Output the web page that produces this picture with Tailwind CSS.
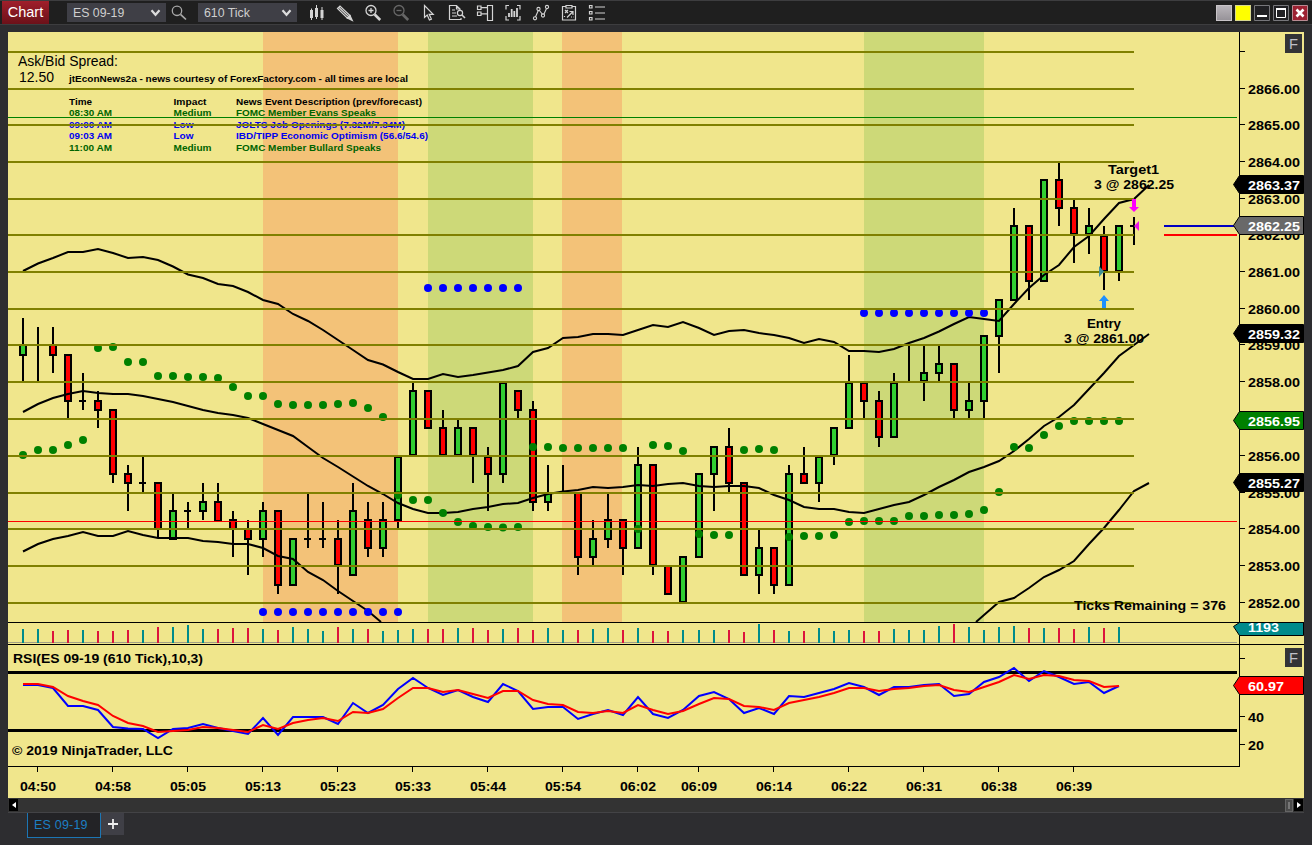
<!DOCTYPE html>
<html lang="en">
<head>
  <meta charset="UTF-8">
  <meta name="viewport" content="width=device-width,initial-scale=1">
  <title>Chart - ES 09-19</title>
  <script src="https://cdn.jsdelivr.net/npm/@tailwindcss/browser@4"></script>
</head>
<body class="w-[1312px] h-[845px] overflow-hidden bg-[#2d2d30] font-['Liberation_Sans',sans-serif] flex flex-col">

  <!-- Toolbar -->
  <header class="h-[25px] shrink-0 flex items-center bg-[#1f1f1f] border-t border-b border-[#3d3d3f] pl-0.5 pr-1">
    <div class="w-[47px] h-[23px] flex items-center justify-center bg-linear-to-b from-[#a01f2b] to-[#6c1119] text-white text-[14.5px]">Chart</div>
    <div class="ml-[18px] w-[99px] h-[19px] flex items-center justify-between bg-[#3f3f46] pl-1.5 pr-[5px] pt-px text-[12.3px] text-[#cfcfcf]">
      ES 09-19
      <svg width="11" height="8" viewBox="0 0 11 8" fill="none" stroke="#dcdcdc" stroke-width="2.2"><path d="M1.5 1.2 5.5 5.8 9.5 1.2"/></svg>
    </div>
    <svg class="ml-[5px]" width="17" height="18" viewBox="0 0 17 18" fill="none" stroke="#a8a8a8" stroke-width="1.3"><circle cx="6" cy="6.8" r="4.7"/><path d="M9.5 10.3 15 15.5" stroke-width="1.7"/></svg>
    <div class="ml-[10px] w-[99px] h-[19px] flex items-center justify-between bg-[#3f3f46] pl-1.5 pr-[5px] pt-px text-[12.3px] text-[#cfcfcf]">
      610 Tick
      <svg width="11" height="8" viewBox="0 0 11 8" fill="none" stroke="#dcdcdc" stroke-width="2.2"><path d="M1.5 1.2 5.5 5.8 9.5 1.2"/></svg>
    </div>

    <nav class="ml-[6px] flex text-[#d4d4d4]">
      <div class="w-7 flex justify-center"><svg width="18" height="18" viewBox="0 0 18 18" fill="currentColor"><path d="M2 6h3v8H2zM3 4.500h1V16H3zM7 4h3v9H7zM8 1h1v14H8zM12.500 6h3v8h-3zM13.500 3h1v13h-1z"/></svg></div>
      <div class="w-7 flex justify-center"><svg width="18" height="18" viewBox="0 0 18 18" fill="none" stroke="currentColor" stroke-width="1.2"><path d="M1.500 4.500 4 2l10 9.500-2.600 2.600zM3 3.500l10 9.500"/><path d="M11.400 14.100 14 11.500l2.300 5z" fill="currentColor"/></svg></div>
      <div class="w-7 flex justify-center"><svg width="18" height="18" viewBox="0 0 18 18" fill="none" stroke="currentColor" stroke-width="1.3"><circle cx="7" cy="6.500" r="5"/><path d="M4.500 6.500h5M7 4v5"/><path d="m10.700 10.500 5.500 5.500" stroke-width="2.600"/></svg></div>
      <div class="w-7 flex justify-center text-[#676767]"><svg width="18" height="18" viewBox="0 0 18 18" fill="none" stroke="currentColor" stroke-width="1.300"><circle cx="7" cy="6.500" r="5"/><path d="M4.500 6.500h5"/><path d="m10.700 10.500 5.500 5.500" stroke-width="2.600"/></svg></div>
      <div class="w-7 flex justify-center"><svg width="18" height="18" viewBox="0 0 18 18" fill="none" stroke="currentColor" stroke-width="1.200"><path d="M4.500 1.500v12l2.700-2.500 2.200 5 2-.9-2.200-4.800h4z"/></svg></div>
      <div class="w-7 flex justify-center"><svg width="18" height="18" viewBox="0 0 18 18" fill="none" stroke="currentColor" stroke-width="1.200"><path d="M12 6V5L8.500 1.500h-7v14H13V14M8.500 1.500V5H12M4 6h3M4 9h4M4 12h5"/><circle cx="12" cy="9" r="2.600"/><path d="m14 11 3 3" stroke-width="1.600"/></svg></div>
      <div class="w-7 flex justify-center"><svg width="18" height="18" viewBox="0 0 18 18" fill="none" stroke="currentColor" stroke-width="1.200"><path d="M11.500 1.500h5v15h-5zM1.500 2h3.500v3.500H1.500zM1.500 8h3.500v3.500H1.500zM5 3.700h6.500M5 9.800h6.500"/></svg></div>
      <div class="w-7 flex justify-center"><svg width="18" height="18" viewBox="0 0 18 18" fill="none" stroke="currentColor" stroke-width="1.200"><path d="M5 1.500H2v4M13 1.500h3v4M2 12v4h3M16 12v4h-3"/><path d="M5 13V9M7.700 13V5M10.300 13V7M13 13V4" stroke-width="1.800"/></svg></div>
      <div class="w-7 flex justify-center"><svg width="18" height="18" viewBox="0 0 18 18" fill="none" stroke="currentColor" stroke-width="1.100"><path d="m3 14 3.500-8M7 6l4 5M11.500 11l3.500-7.500"/><g fill="#1f1f1f"><circle cx="3" cy="14.300" r="1.600"/><circle cx="6.500" cy="5" r="1.600"/><circle cx="11" cy="11.500" r="1.600"/><circle cx="15" cy="3" r="1.600"/></g></svg></div>
      <div class="w-7 flex justify-center"><svg width="18" height="18" viewBox="0 0 18 18" fill="none" stroke="currentColor" stroke-width="1.200"><path d="M6 2.500H2.500v13.500h13V2.500H12M6 1.500h6v2.500H6z"/><path d="m5 6 3 3M8 6 5 9M7 13.500l5.500-5.500M9.500 7.500h3.500V11"/><path d="M4.500 12v2M11 13h2.500" stroke-dasharray="1 1"/></svg></div>
      <div class="w-7 flex justify-center"><svg width="18" height="18" viewBox="0 0 18 18" fill="none" stroke="currentColor" stroke-width="1.200"><path d="M1.500 1.500H4V4H1.500zM1.500 7.500H4V10H1.500zM1.500 13.500H4V16H1.500zM7 3h10M7 9h10M7 15h10"/></svg></div>
    </nav>

    <div class="ml-auto flex gap-[3px]">
      <div class="w-4 h-4 border border-[#c8c4c8] bg-linear-to-b from-[#b9b5ba] to-[#979399]"></div>
      <div class="w-4 h-4 border border-[#d8d890] bg-[#ffff00]"></div>
      <svg width="16" height="16" viewBox="0 0 16 16"><path d="M.5.5h15v15H.5z" fill="#202023" stroke="#77777b"/><path d="M3 10h10v2H3z" fill="#fff"/></svg>
      <svg width="16" height="16" viewBox="0 0 16 16"><path d="M.5.5h15v15H.5z" fill="#202023" stroke="#77777b"/><path d="M3.500 3.500h9v9h-9z" fill="none" stroke="#fff"/><path d="M3 3h10v2H3z" fill="#fff"/></svg>
      <svg width="16" height="16" viewBox="0 0 16 16"><path d="M.5.5h15v15H.5z" fill="#9c2232" stroke="#b98b92"/><path d="m4.500 4.500 7 7M11.500 4.500l-7 7" stroke="#fff" stroke-width="2.600"/></svg>
    </div>
  </header>

  <!-- Chart panels -->
  <main class="mt-[7px] mx-2 h-[766px] shrink-0 bg-[#f0e68c]">
    <svg id="chart" class="block" width="1296" height="766" viewBox="8 32 1296 766" font-family="'Liberation Sans', sans-serif"></svg>
  </main>

  <!-- Horizontal scrollbar -->
  <div class="mx-2 h-[15px] shrink-0 flex items-center justify-between bg-[#333333] border-b border-[#434346] px-px">
    <div class="w-[9px] h-3 bg-black flex items-center justify-center"><svg width="4" height="6" viewBox="0 0 4 6" fill="#fff"><path d="M4 0v6L0 3z"/></svg></div>
    <div class="flex">
      <div class="w-2 h-[13px] bg-[#4a4a4a] border border-[#656565] flex justify-center"><div class="w-0.5 my-0.5 bg-[#777777]"></div></div>
      <div class="ml-px w-[9px] h-3 bg-black flex items-center justify-center"><svg width="4" height="6" viewBox="0 0 4 6" fill="#fff"><path d="M0 0v6l4-3z"/></svg></div>
    </div>
  </div>

  <!-- Tabs -->
  <footer class="flex items-start pl-[27px]">
    <div class="w-[74px] h-[25px] border border-t-0 border-[#1c76b4] bg-[#232326] pl-1.5 pt-1 text-[12.5px] leading-4 tracking-[0.2px] text-[#1c7fc4]">ES 09-19</div>
    <div class="w-[23px] h-[22px] bg-[#3f3f46] flex items-center justify-center"><svg width="10" height="10" viewBox="0 0 10 10" stroke="#eeeeee" stroke-width="1.800"><path d="M5 0v10M0 5h10"/></svg></div>
  </footer>

  <script>
    const chart = document.getElementById('chart');
    let out = '';

    const rect = (x, y, w, h, fill) => { out += `<rect x="${x}" y="${y}" width="${w}" height="${h}" fill="${fill}" shape-rendering="crispEdges"/>`; };
    const text = (x, y, str, len, size = 13, fill = '#000', weight = 'bold') => {
      out += `<text x="${x}" y="${y}" font-size="${size}" font-weight="${weight}" fill="${fill}" textLength="${len}" lengthAdjust="spacingAndGlyphs">${str}</text>`;
    };
    const barX = i => 23 + 15 * i + (i >= 45 ? 1 : 0);
    const line = (points, stroke) => {
      out += `<polyline points="${points.map(p => p.join(',')).join(' ')}" fill="none" stroke="${stroke}" stroke-width="2"/>`;
    };
    const series = (ys, start = 0) => ys.map((y, i) => [barX(start + i), y]);
    const dots = (ys, start, fill) => {
      ys.forEach((y, i) => { out += `<circle cx="${barX(start + i)}" cy="${y}" r="4" fill="${fill}"/>`; });
    };

    // session bands
    rect(263, 32, 135, 590, '#f3c278');
    rect(428, 32, 105, 590, '#cdd978');
    rect(562, 32, 60, 590, '#f3c278');
    rect(864, 32, 120, 590, '#cdd978');

    // header text
    text(18, 66, 'Ask/Bid Spread:', 100, 14, '#000', 'normal');
    text(19, 82, '12.50', 35, 14, '#000', 'normal');
    text(69, 82, 'jtEconNews2a - news courtesy of ForexFactory.com - all times are local', 339, 9.5);
    const news = [
      [105, '#000', 'Time', 23, 'Impact', 33, 'News Event Description (prev/forecast)', 186],
      [116, '#006400', '08:30 AM', 43, 'Medium', 38, 'FOMC Member Evans Speaks', 140],
      [128, '#0000f0', '09:00 AM', 43, 'Low', 20, 'JOLTS Job Openings (7.32M/7.34M)', 169],
      [139, '#0000f0', '09:03 AM', 43, 'Low', 20, 'IBD/TIPP Economic Optimism (56.6/54.6)', 192],
      [151, '#006400', '11:00 AM', 43, 'Medium', 38, 'FOMC Member Bullard Speaks', 145]
    ];
    news.forEach(n => {
      text(69, n[0], n[2], n[3], 9.5, n[1]);
      text(173.500, n[0], n[4], n[5], 9.5, n[1]);
      text(236, n[0], n[6], n[7], 9.5, n[1]);
    });

    // candles: wick top, body top, body bottom, wick bottom, type (g up, r down, d doji)
    const candles = [
      [318,344,356,381,'g'],[327,345,345,381,'d'],[327,344,356,373,'r'],[354,354,402,418,'r'],[373,401,401,410,'d'],
      [391,400,411,428,'r'],[409,409,475,483,'r'],[465,473,484,511,'r'],[457,483,483,492,'d'],[482,482,530,538,'r'],
      [494,510,540,540,'g'],[502,511,511,528,'d'],[483,501,512,520,'g'],[483,501,522,522,'r'],[511,519,530,557,'r'],
      [520,528,540,575,'r'],[502,510,540,557,'g'],[510,510,586,594,'r'],[538,538,586,586,'g'],[494,539,539,548,'d'],
      [502,539,539,548,'d'],[520,538,566,594,'r'],[483,510,576,576,'g'],[502,519,549,557,'r'],[502,519,549,557,'g'],
      [456,456,521,528,'g'],[382,390,456,456,'g'],[390,390,429,429,'r'],[410,427,456,456,'r'],[420,427,456,456,'g'],
      [427,427,456,483,'r'],[447,456,475,511,'r'],[382,382,475,483,'g'],[390,390,411,418,'r'],[401,409,503,511,'r'],
      [465,492,503,511,'g'],[465,493,493,493,'d'],[492,492,558,575,'r'],[520,538,558,565,'g'],[494,519,540,548,'g'],
      [519,519,549,575,'r'],[447,464,549,549,'g'],[464,464,566,575,'r'],[565,565,595,595,'r'],[556,556,603,603,'g'],
      [473,473,558,558,'g'],[446,446,475,511,'g'],[428,446,484,492,'r'],[482,482,576,576,'r'],[530,547,576,594,'g'],
      [547,547,586,594,'r'],[465,473,586,586,'g'],[447,473,484,484,'r'],[456,456,484,502,'g'],[427,427,456,465,'g'],
      [355,382,429,429,'g'],[382,382,402,418,'r'],[391,400,438,447,'r'],[373,382,438,438,'g'],[345,382,382,382,'d'],
      [345,372,382,401,'g'],[345,363,374,382,'g'],[363,363,411,418,'r'],[382,400,411,418,'g'],[335,335,402,418,'g'],
      [299,299,337,373,'g'],[208,225,301,301,'g'],[225,225,282,300,'r'],[179,179,282,282,'g'],[162,179,209,226,'r'],
      [200,207,235,263,'r'],[208,225,235,254,'g'],[226,235,272,290,'r'],[225,225,272,281,'g'],[217,226,226,245,'d']
    ];
    candles.forEach(([hi, top, bot, lo, type], i) => {
      const x = barX(i);
      rect(x - 1, hi, 2, lo - hi, '#000');
      if (type === 'd') {
        rect(x - 4, top - 1, 7, 2, '#000');
      } else {
        rect(x - 4, top, 8, bot - top, '#000');
        rect(x - 2, top + 2, 4, bot - top - 4, type === 'g' ? '#32cd32' : '#ff0000');
      }
    });

    // bollinger / average lines
    line([...series([271,263.5,258,252,252,249,253,258,257,260,266.5,274.5,278,284,286,292,300,304,314,321,330,340,350,360,364.5,372,379,379,374,377,375,372.5,370,366,352,348,338,337,334,334,335,330,325,327,322,328,335,331,330,333,335,338,343,339,342,351,351,352,349,343,338,331.5,324,317,319,321,304,288,275,265,247,236,219,203,199]), [1149,185]], '#000');
    line([...series([412,404,398,394,391,393,394,394,396,399,402,406,410,413,415,418,424,430,436,447,458,467,476.5,486,494,503,509,513,513,512,509,507,504,503,498,494,491.5,490,487,488,487,485,486,484,483,486,487,486,486,488,495,500,507,509,509,512,513,509,505,502,495,487,480,472,467,461,451,439,426,417,405,389,373,356,345]), [1149,334]], '#000');
    line([...series([551.5,544,539,536,532,536,536,531,535,538,538,538,541,542,544,544,548,556,559,572,580,591,601,611]), [381,622]], '#000');
    line([[976,622],...series([615,602,598,588,577,570,561,544,528,510,491], 64), [1149,483]], '#000');

    // trailing stop dots
    dots([455,450,450,445,440,348,347,362,362,376,376,377,377,378,387,396,396,404,405,405,405,404,403,408,417,495,500,500,513,522,526,527,527.5,527,447,447,448,448,448,448,448,529,445,446,451,534,535,535,450,449,450,537,536,536,535,522,521,521,521,516,516,515,515,514,510,492,447,448,435,426,421,421,421,421], 0, '#008000');
    dots([288,288,288,288,288,288,288], 27, '#0000ff');
    dots([313,313,313,313,313,313,313,313,313], 56, '#0000ff');
    dots([612,612,612,612,612,612,612,612,612,612], 16, '#0000ff');

    // price grid, drawn over the bars
    const gridY = [52,89,125,162,199,235,272,309,345,382,419,456,493,529,566,603];
    gridY.forEach(y => rect(8, y - 1, 1126, 2, '#808000'));
    rect(8, 117, 1229, 1, '#008000');
    rect(8, 521, 1229, 1, '#ff0000');
    rect(1164, 225, 74, 2, '#0000c0');
    rect(1164, 234, 73, 2, '#ff0000');

    // trade markers
    text(1108, 174, 'Target1', 51);
    text(1094, 189, '3 @ 2862.25', 80);
    text(1087, 328, 'Entry', 34);
    text(1064, 343, '3 @ 2861.00', 80);
    text(1074, 610, 'Ticks Remaining = 376', 152);
    out += '<path d="M1132 199h4v8h3l-5 5-5-5h3z" fill="#ff00ff"/>';
    out += '<path d="M1102 308h4v-7h3l-5-6-5 6h3z" fill="#1e90ff"/>';
    out += '<path d="M1139 221v10l-5-5z" fill="#e815e8"/>';
    out += '<path d="M1099 266v11l5-5.500z" fill="#3f8f98"/>';

    // volume
    rect(8, 642, 1229, 1, '#a39f83');
    [629,629,631,630,630,631,631,630,630,627,627,625,629,629,628,628,629,630,627,629,631,627,629,629,631,630,629,629,629,628,628,630,629,628,630,628,630,630,629,628,630,628,631,631,630,630,630,630,632,624,630,631,631,628,631,630,631,631,629,630,630,626,624,627,630,627,626,628,628,628,629,627,628,627]
      .forEach((y, i) => rect(barX(i) - 1, y, 2, 643 - y, candles[i][4] === 'r' ? '#dc143c' : '#008b8b'));

    // RSI
    rect(8, 671, 1229, 3, '#000');
    rect(8, 729, 1229, 3, '#000');
    line(series([685,685,688,706,706,710,727,728.5,729,738,729,728,724,728,731,734,718,735,717,717,717,724,703,713,705,689,678,688,695,690,697,702,684,691,709,707,707,719,714,710,715,697,714,718,710,696,692,699,713,708,714,696,697,693,689,683,687,695,687,687,685,684,696,694,682,677,668,681,671,677,684,682,693,686]), '#0000ff');
    line(series([684,684,687,696,701,705,716,723,726,732,731,730,727,728,730,732,725,729,723,720,718,721,712,713,709,698,688,688,692,690,694,698,691,691,700,704,705,712,713,711,713,705,710,714,711,704,698,699,706,707,710,703,700,697,693,688,688,691,689,688,686,685,690,692,687,682,675,679,675,676,680,681,687,686]), '#ff0000');
    text(13, 663, 'RSI(ES 09-19 (610 Tick),10,3)', 190);
    text(12, 755, '© 2019 NinjaTrader, LLC', 161);

    // panel borders
    rect(8, 622, 1296, 1, '#000');
    rect(8, 644, 1296, 1, '#000');
    rect(8, 766, 1232, 1, '#000');
    rect(1239, 32, 1, 735, '#000');

    // price axis
    gridY.forEach((y, i) => {
      rect(1240, y - 1, 5, 1, '#000');
      if (i > 0) text(1248, y + 5, (2867 - i) + '.00', 52);
    });
    rect(1240, 658, 5, 1, '#000');
    rect(1240, 716, 5, 1, '#000');
    rect(1240, 744, 5, 1, '#000');
    text(1248, 722, '40', 16);
    text(1248, 750, '20', 16);

    const flag = (y, bottom, fill, label, len, base) => {
      const mid = bottom - 9.5;
      out += `<path d="M1233.500 ${mid}L1239.500 ${y + .5}H1303.500V${bottom - .5}H1239.500z" fill="${fill}" stroke="#000"/>`;
      text(1248, base, label, len, 13, '#fff');
    };
    flag(175, 194, '#000', '2863.37', 52, 190);
    flag(216, 235, '#696969', '2862.25', 52, 231);
    flag(324, 343, '#000', '2859.32', 52, 339);
    flag(411, 430, '#008000', '2856.95', 52, 426);
    flag(473, 492, '#000', '2855.27', 52, 488);
    flag(622, 636, '#008b8b', '1193', 31, 632);
    flag(676, 695, '#ff0000', '60.97', 36, 691);

    // fixed scale buttons
    rect(1285, 34, 17, 19, '#333336');
    text(1289, 49, 'F', 9, 15, '#c0c0c8', 'normal');
    rect(1285, 648, 17, 19, '#333336');
    text(1289, 663, 'F', 9, 15, '#c0c0c8', 'normal');

    // time axis
    [['04:50',38],['04:58',113],['05:05',188],['05:13',263],['05:23',338],['05:33',413],['05:44',488],['05:54',563],['06:02',638],['06:09',699],['06:14',774],['06:22',849],['06:31',924],['06:38',999],['06:39',1074]]
      .forEach(([label, x]) => {
        rect(x - 1, 767, 1, 5, '#000');
        text(x - 18, 791, label, 36);
      });

    chart.innerHTML = out;
  </script>
</body>
</html>
